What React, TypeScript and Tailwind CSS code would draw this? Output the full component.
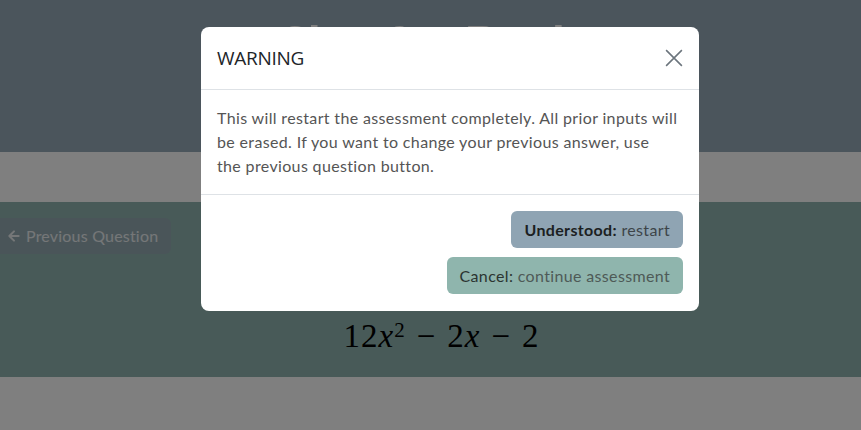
import React from 'react';

export default function App() {
    return (
        <div className="relative h-[430px] w-[861px] overflow-hidden bg-white font-['Lato',sans-serif] tracking-[0.35px]">
            {/* page behind the modal */}
            <div className="flex h-[152px] justify-center bg-[#96aab8] pt-[17px]">
                <h1 className="text-[52px] font-bold leading-none tracking-normal text-white">Slay for Dash</h1>
            </div>
            <div className="h-[50px] bg-white" />
            <div className="flex h-[175px] flex-col bg-[#90b4b0]">
                <div className="pt-[16px]">
                    <button className="flex h-[36px] items-center gap-1 rounded-r-md bg-[#95abb3] pl-[6px] pr-[13px] text-[16px] tracking-[0.2px] text-white/80">
                        <svg className="h-4 w-4" viewBox="0 0 24 24" fill="none" stroke="currentColor" strokeWidth={3} strokeLinecap="round" strokeLinejoin="round">
                            <path d="M19 12H5M12 19l-7-7 7-7" />
                        </svg>
                        Previous Question
                    </button>
                </div>
                <div className="mt-[58px] pl-[22px] text-center font-['Liberation_Serif',serif] text-[33px] tracking-[1px] text-black">
                    12<i>x</i><sup className="text-[21px]">2</sup>
                    <span className="mx-[11px]">−</span>2<i>x</i>
                    <span className="mx-[11px]">−</span>2
                </div>
            </div>
            <div className="h-[53px] bg-white" />

            {/* overlay */}
            <div className="absolute inset-0 bg-black/50" />

            {/* modal */}
            <div className="absolute left-[201px] top-[27px] w-[498px] overflow-hidden rounded-lg bg-white">
                <div className="flex h-[63px] items-center justify-between border-b border-[#dee2e6] px-4">
                    <h5 className="font-['Open_Sans',sans-serif] text-[19px] tracking-[-0.3px] text-[#212529]">WARNING</h5>
                    <svg className="h-[18px] w-[18px] text-[#6c757d]" viewBox="0 0 16 16" fill="none" stroke="currentColor" strokeWidth={1.4}>
                        <path d="M1 1l14 14M15 1L1 15" />
                    </svg>
                </div>
                <div className="px-4 py-[16px] text-[16px] leading-6 text-[#555]">
                    This will restart the assessment completely. All prior inputs will be erased. If you want to change your previous answer, use
                    <br />
                    the previous question button.
                </div>
                <div className="flex flex-col items-end gap-[9px] border-t border-[#dee2e6] px-4 pb-[17px] pt-[16px]">
                    <button className="h-[37px] rounded-md bg-[#8fa4b3] px-[13px] text-[16px] text-[#3d4449]">
                        <b className="font-bold text-[#1c1f22]">Understood:</b> restart
                    </button>
                    <button className="h-[37px] rounded-md bg-[#8fb5ad] px-[13px] text-[16px] text-[#4e5a57]">
                        <span className="text-[#2b3431]">Cancel:</span> continue assessment
                    </button>
                </div>
            </div>
        </div>
    );
}
